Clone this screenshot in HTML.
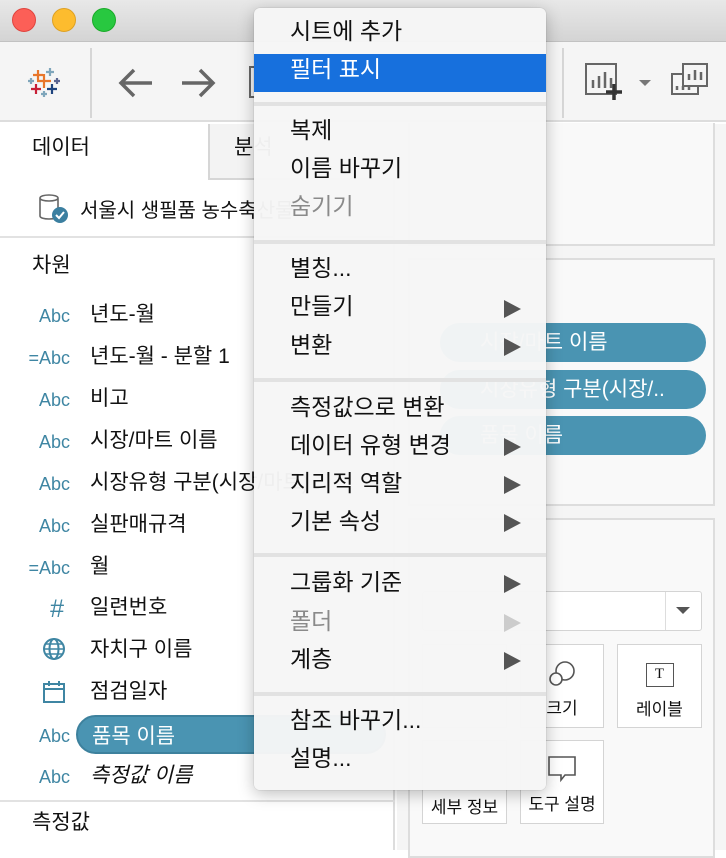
<!DOCTYPE html>
<html><head><meta charset="utf-8"><style>
*{margin:0;padding:0;box-sizing:border-box}
body{width:726px;height:850px;overflow:hidden;background:#fff;font-family:"Liberation Sans","Noto Sans CJK KR",sans-serif;position:relative;color:#111}
.a{position:absolute}
.dot{position:absolute;top:8px;width:24px;height:24px;border-radius:50%}
.t{position:absolute;font-size:21px;white-space:nowrap;line-height:24px}
.ic{position:absolute;width:70px;text-align:right;font-size:18px;color:#3f86a3;line-height:24px;left:0}
.pill{position:absolute;background:#4a94b2;border-radius:20px;color:#fff;font-size:21px;line-height:39px;height:39px;white-space:nowrap;overflow:hidden}
.menu{position:absolute;left:254px;top:8px;width:292px;height:782px;background:rgba(246,246,246,0.97);border-radius:6px;box-shadow:0 4px 16px rgba(0,0,0,0.25),0 0 1px rgba(0,0,0,0.3)}
.mi{position:absolute;left:36px;font-size:23px;line-height:30px;white-space:nowrap}
.arr{position:absolute;left:250px;width:0;height:0;border-top:9px solid transparent;border-bottom:9px solid transparent;border-left:17px solid #555}
.sep{position:absolute;left:0;width:292px;height:4px;background:#e2e2e2}
.box{position:absolute;border:1px solid #d4d4d4;background:#fff;font-size:17px;text-align:center}
</style></head><body>
<div class="a" style="left:0;top:0;width:726px;height:42px;background:linear-gradient(#e8e8e8,#d4d4d4);border-bottom:1px solid #c2c2c2"></div>
<div class="dot" style="left:12px;background:#fc5f57;border:1px solid #e0443e"></div>
<div class="dot" style="left:52px;background:#fdbc2e;border:1px solid #dea123"></div>
<div class="dot" style="left:92px;background:#28c840;border:1px solid #1aab29"></div>
<div class="a" style="left:0;top:42px;width:726px;height:80px;background:#f5f5f5;border-bottom:2px solid #ddd"></div>
<div class="a" style="left:90px;top:48px;width:2px;height:70px;background:#d6d6d6"></div>
<div class="a" style="left:562px;top:48px;width:2px;height:70px;background:#d6d6d6"></div>
<svg class="a" style="left:26px;top:66px" width="36" height="32" viewBox="0 0 36 32">
<g stroke-width="2.2"><path d="M12 4v10M7 9h10" stroke="#e8762b"/><path d="M24 2v8M20 6h8" stroke="#7fa6bb"/><path d="M18 8v14M11 15h14" stroke="#e8762b"/><path d="M5 12v6M2 15h6" stroke="#7fa6bb"/><path d="M31 12v6M28 15h6" stroke="#5b6591"/><path d="M10 18v10M5 23h10" stroke="#c72037"/><path d="M26 18v10M21 23h10" stroke="#1f447e"/><path d="M18 25v6M15 28h6" stroke="#7fa6bb"/></g></svg>
<svg class="a" style="left:116px;top:66px" width="40" height="34"><path d="M36 17H6M18 4L5 17l13 13" stroke="#666" stroke-width="3.5" fill="none"/></svg>
<svg class="a" style="left:180px;top:66px" width="40" height="34"><path d="M2 17h30M20 4l13 13-13 13" stroke="#666" stroke-width="3.5" fill="none"/></svg>
<div class="a" style="left:249px;top:66px;width:6px;height:32px;border:2px solid #666;border-right:none"></div>
<svg class="a" style="left:584px;top:62px" width="40" height="40"><rect x="2" y="2" width="30" height="30" fill="none" stroke="#666" stroke-width="2"/><path d="M9 26v-8M15 26v-12M21 26v-16M27 26v-10" stroke="#666" stroke-width="2.5"/><path d="M30 22v16M22 30h16" stroke="#333" stroke-width="3.5"/></svg>
<div class="a" style="left:639px;top:80px;border-left:6px solid transparent;border-right:6px solid transparent;border-top:6px solid #777"></div>
<svg class="a" style="left:669px;top:62px" width="40" height="40"><rect x="14" y="2" width="24" height="22" fill="none" stroke="#666" stroke-width="2"/><path d="M20 18v-6M26 18v-10M32 18v-8" stroke="#666" stroke-width="2.5"/><path d="M14 12H3v20h26v-8" fill="none" stroke="#666" stroke-width="2"/><path d="M8 28v-4M14 28v-4M20 28v-4" stroke="#666" stroke-width="2.5"/></svg>
<div class="a" style="left:0;top:124px;width:395px;height:726px;background:#fff;border-right:2px solid #ddd"></div>
<div class="a" style="left:208px;top:124px;width:190px;height:56px;background:#f3f3f3;border-left:2px solid #d6d6d6;border-bottom:2px solid #d6d6d6"></div>
<div class="t" style="left:32px;top:136px">데이터</div>
<div class="t" style="left:234px;top:136px">분석</div>
<svg class="a" style="left:38px;top:193px" width="32" height="32"><path d="M2 5c0-4 18-4 18 0v18c0 4-18 4-18 0z M2 5c0 4 18 4 18 0" fill="none" stroke="#666" stroke-width="1.6"/><circle cx="22" cy="22" r="8" fill="#3b7fa0"/><path d="M18 22l3 3 5-6" stroke="#fff" stroke-width="2" fill="none"/></svg>
<div class="t" style="left:80px;top:199px;font-size:20px">서울시 생필품 농수축산물</div>
<div class="a" style="left:0;top:236px;width:395px;height:2px;background:#e2e2e2"></div>
<div class="t" style="left:32px;top:254px">차원</div>
<div class="ic" style="top:304px">Abc</div><div class="t" style="left:90px;top:303px">년도-월</div>
<div class="ic" style="top:346px">=Abc</div><div class="t" style="left:90px;top:345px">년도-월 - 분할 1</div>
<div class="ic" style="top:388px">Abc</div><div class="t" style="left:90px;top:387px">비고</div>
<div class="ic" style="top:430px">Abc</div><div class="t" style="left:90px;top:429px">시장/마트 이름</div>
<div class="ic" style="top:472px">Abc</div><div class="t" style="left:90px;top:471px">시장유형 구분(시장/마트)</div>
<div class="ic" style="top:514px">Abc</div><div class="t" style="left:90px;top:513px">실판매규격</div>
<div class="ic" style="top:556px">=Abc</div><div class="t" style="left:90px;top:555px">월</div>
<div class="ic" style="top:597px;font-size:25px;width:64px">#</div><div class="t" style="left:90px;top:596px">일련번호</div>
<svg class="a" style="left:42px;top:637px" width="24" height="24"><circle cx="12" cy="12" r="10" fill="none" stroke="#3f86a3" stroke-width="2"/><ellipse cx="12" cy="12" rx="4.5" ry="10" fill="none" stroke="#3f86a3" stroke-width="2"/><path d="M2 12h20M4 7h16M4 17h16" stroke="#3f86a3" stroke-width="1.6"/></svg>
<div class="t" style="left:90px;top:638px">자치구 이름</div>
<svg class="a" style="left:42px;top:680px" width="24" height="24"><rect x="2" y="4" width="20" height="18" fill="none" stroke="#3f86a3" stroke-width="2"/><path d="M2 9h20M7 1v5M17 1v5" stroke="#3f86a3" stroke-width="2"/></svg>
<div class="t" style="left:90px;top:680px">점검일자</div>
<div class="ic" style="top:724px">Abc</div>
<div class="pill" style="left:76px;top:715px;width:310px;padding-left:14px;border:2px solid #3d819d">품목 이름</div>
<div class="ic" style="top:765px">Abc</div><div class="t" style="left:90px;top:764px;font-style:italic">측정값 이름</div>
<div class="a" style="left:0;top:800px;width:395px;height:2px;background:#e2e2e2"></div>
<div class="t" style="left:32px;top:811px">측정값</div>
<div class="a" style="left:397px;top:124px;width:329px;height:726px;background:#f5f5f5"></div>
<div class="a" style="left:408px;top:123px;width:307px;height:123px;background:#f9f9f9;border:2px solid #ddd;border-top:none"></div>
<div class="a" style="left:408px;top:258px;width:307px;height:248px;background:#f9f9f9;border:2px solid #ddd"></div>
<div class="pill" style="left:440px;top:323px;width:266px;padding-left:40px">시장/마트 이름</div>
<div class="pill" style="left:440px;top:370px;width:266px;padding-left:40px">시장유형 구분(시장/..</div>
<div class="pill" style="left:440px;top:416px;width:266px;padding-left:40px">품목 이름</div>
<div class="a" style="left:408px;top:518px;width:307px;height:340px;background:#f9f9f9;border:2px solid #ddd"></div>
<div class="box" style="left:422px;top:591px;width:280px;height:40px;border-radius:3px"></div>
<div class="a" style="left:665px;top:592px;width:1px;height:38px;background:#ddd"></div>
<div class="a" style="left:676px;top:607px;border-left:7px solid transparent;border-right:7px solid transparent;border-top:7px solid #555"></div>
<div class="box" style="left:422px;top:644px;width:85px;height:84px"></div>
<div class="box" style="left:520px;top:644px;width:84px;height:84px"><svg style="margin-top:14px" width="30" height="30"><circle cx="18" cy="12" r="9" fill="none" stroke="#555" stroke-width="1.6"/><circle cx="9" cy="20" r="6" fill="#fff" stroke="#555" stroke-width="1.6"/></svg><div>크기</div></div>
<div class="box" style="left:617px;top:644px;width:85px;height:84px"><div style="margin:18px auto 0;width:28px;height:24px;border:1.6px solid #555;font-family:'Liberation Serif',serif;font-size:15px;line-height:21px">T</div><div style="margin-top:8px">레이블</div></div>
<div class="box" style="left:422px;top:740px;width:85px;height:84px"><div style="margin-top:52px">세부 정보</div></div>
<div class="box" style="left:520px;top:740px;width:84px;height:84px"><svg style="margin-top:14px" width="30" height="30"><path d="M2 2h26v18H18l-4 5v-5H2z" fill="none" stroke="#555" stroke-width="1.6"/></svg><div>도구 설명</div></div>
<div class="menu">
<div class="mi" style="top:8px">시트에 추가</div>
<div class="a" style="left:0;top:46px;width:292px;height:38px;background:#1770dd"></div>
<div class="mi" style="top:46px;color:#fff">필터 표시</div>
<div class="sep" style="top:94px"></div>
<div class="mi" style="top:107px">복제</div>
<div class="mi" style="top:145px">이름 바꾸기</div>
<div class="mi" style="top:183px;color:#8a8a8a">숨기기</div>
<div class="sep" style="top:232px"></div>
<div class="mi" style="top:245px">별칭...</div>
<div class="mi" style="top:283px">만들기</div><div class="arr" style="top:292px"></div>
<div class="mi" style="top:322px">변환</div><div class="arr" style="top:330px"></div>
<div class="sep" style="top:370px"></div>
<div class="mi" style="top:384px">측정값으로 변환</div>
<div class="mi" style="top:422px">데이터 유형 변경</div><div class="arr" style="top:430px"></div>
<div class="mi" style="top:460px">지리적 역할</div><div class="arr" style="top:468px"></div>
<div class="mi" style="top:498px">기본 속성</div><div class="arr" style="top:506px"></div>
<div class="sep" style="top:545px"></div>
<div class="mi" style="top:559px">그룹화 기준</div><div class="arr" style="top:567px"></div>
<div class="mi" style="top:598px;color:#8a8a8a">폴더</div><div class="arr" style="top:606px;border-left-color:#ccc"></div>
<div class="mi" style="top:636px">계층</div><div class="arr" style="top:644px"></div>
<div class="sep" style="top:684px"></div>
<div class="mi" style="top:697px">참조 바꾸기...</div>
<div class="mi" style="top:735px">설명...</div>
</div>
</body></html>
